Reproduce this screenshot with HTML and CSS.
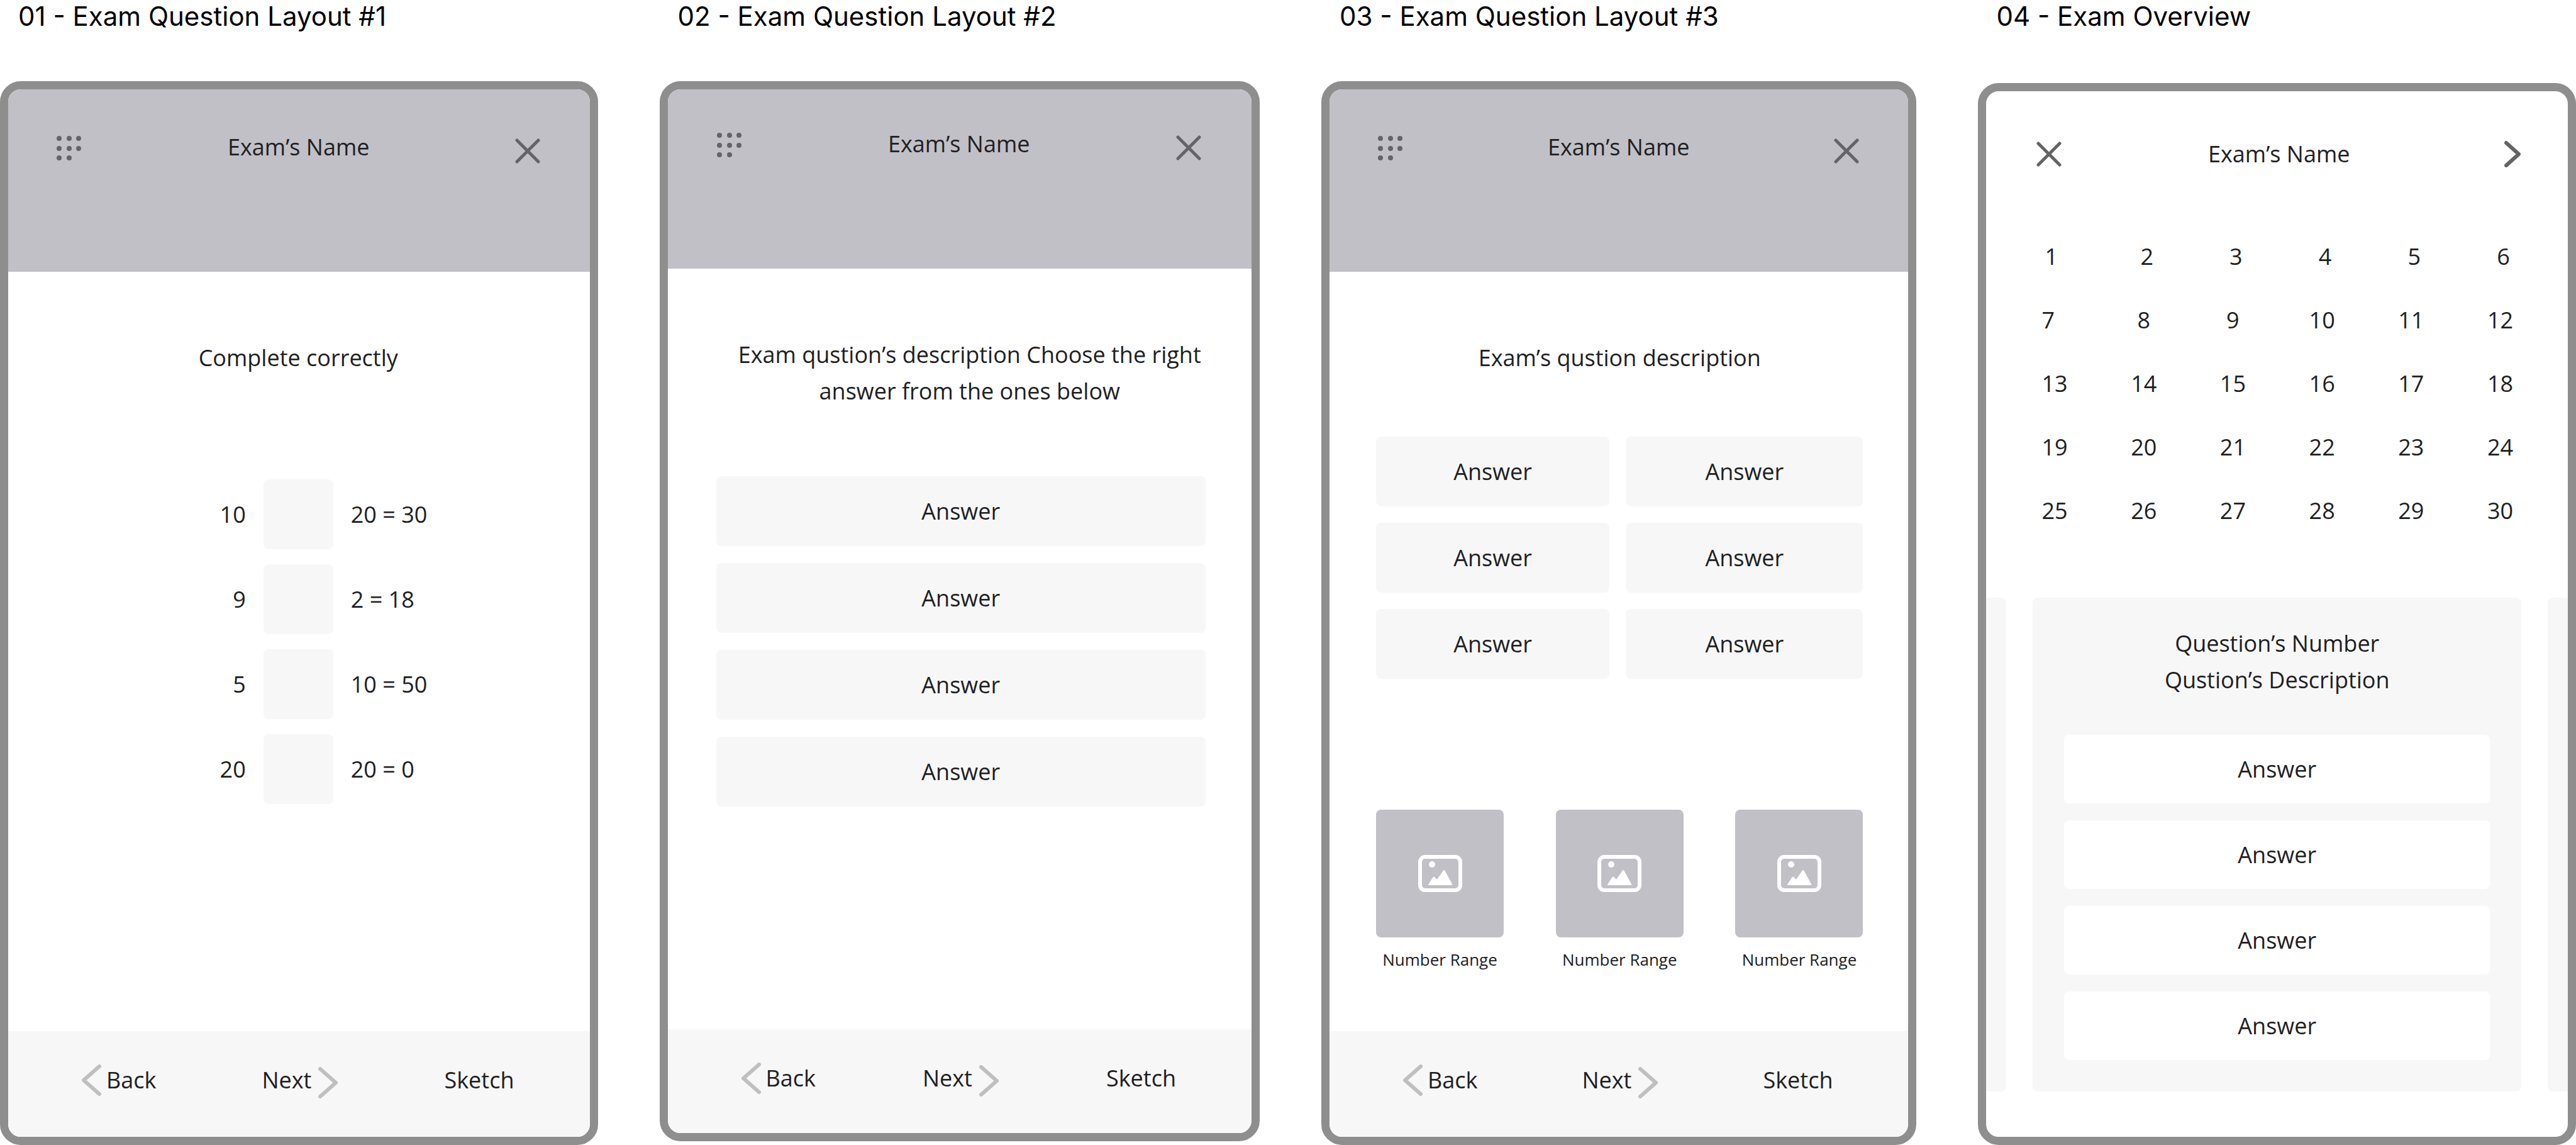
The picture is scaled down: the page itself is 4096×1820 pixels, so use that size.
FILE: index.html
```html
<!DOCTYPE html>
<html lang="en">
<head>
<meta charset="utf-8">
<title>Exam screens</title>
<link rel="stylesheet" href="styles.css">
</head>
<body>
<svg class="sprite" aria-hidden="true">
  <symbol id="dots" viewBox="0 0 40 40">
    <circle cx="4" cy="4" r="4"/><circle cx="20" cy="4" r="4"/><circle cx="35" cy="4" r="4"/>
    <circle cx="4" cy="20" r="4"/><circle cx="20" cy="20" r="4"/><circle cx="35" cy="20" r="4"/>
    <circle cx="4" cy="35" r="4"/><circle cx="20" cy="35" r="4"/>
  </symbol>
  <symbol id="cross" viewBox="0 0 40 40"><path d="M3 3L37 37M37 3L3 37"/></symbol>
  <symbol id="left" viewBox="0 0 32 50"><path d="M29 3L4 25L29 47"/></symbol>
  <symbol id="right" viewBox="0 0 32 50"><path d="M3 3L28 25L3 47"/></symbol>
  <symbol id="forward" viewBox="0 0 27 42"><path d="M3 3L23 21L3 39"/></symbol>
  <symbol id="picture" viewBox="0 0 70 60">
    <rect x="3" y="3" width="64" height="53" rx="8" fill="none" stroke="#fff" stroke-width="6"/>
    <circle cx="22" cy="15" r="5" fill="#fff"/>
    <path d="M16 47L23 36Q25 33 27 36L30 39L39 26Q41 22 43 26L54 46Q55 48 53 48H17Q15 48 16 47Z" fill="#fff"/>
  </symbol>
</svg>
<main class="board">

  <section class="screen complete">
    <h2 class="screen-title">01 - Exam Question Layout #1</h2>
    <div class="phone">
      <header class="bar">
        <button class="icon-btn menu" aria-label="Questions"><svg><use href="#dots"/></svg></button>
        <h3 class="name">Exam’s Name</h3>
        <button class="icon-btn close" aria-label="Close"><svg><use href="#cross"/></svg></button>
      </header>
      <div class="content">
        <p class="question">Complete correctly</p>
        <div class="sums">
          <label class="left" for="s1">10</label><input class="blank" id="s1" type="text"><span>20 = 30</span>
          <label class="left" for="s2">9</label><input class="blank" id="s2" type="text"><span>2 = 18</span>
          <label class="left" for="s3">5</label><input class="blank" id="s3" type="text"><span>10 = 50</span>
          <label class="left" for="s4">20</label><input class="blank" id="s4" type="text"><span>20 = 0</span>
        </div>
      </div>
      <footer class="nav">
        <button class="nav-btn back"><svg><use href="#left"/></svg>Back</button>
        <button class="nav-btn next">Next<svg><use href="#right"/></svg></button>
        <button class="nav-btn">Sketch</button>
      </footer>
    </div>
  </section>

  <section class="screen choice">
    <h2 class="screen-title">02 - Exam Question Layout #2</h2>
    <div class="phone">
      <header class="bar">
        <button class="icon-btn menu" aria-label="Questions"><svg><use href="#dots"/></svg></button>
        <h3 class="name">Exam’s Name</h3>
        <button class="icon-btn close" aria-label="Close"><svg><use href="#cross"/></svg></button>
      </header>
      <div class="content">
        <p class="question">Exam qustion’s description Choose the right<br>answer from the ones below</p>
        <div class="answers">
          <button class="answer">Answer</button>
          <button class="answer">Answer</button>
          <button class="answer">Answer</button>
          <button class="answer">Answer</button>
        </div>
      </div>
      <footer class="nav">
        <button class="nav-btn back"><svg><use href="#left"/></svg>Back</button>
        <button class="nav-btn next">Next<svg><use href="#right"/></svg></button>
        <button class="nav-btn">Sketch</button>
      </footer>
    </div>
  </section>

  <section class="screen range">
    <h2 class="screen-title">03 - Exam Question Layout #3</h2>
    <div class="phone">
      <header class="bar">
        <button class="icon-btn menu" aria-label="Questions"><svg><use href="#dots"/></svg></button>
        <h3 class="name">Exam’s Name</h3>
        <button class="icon-btn close" aria-label="Close"><svg><use href="#cross"/></svg></button>
      </header>
      <div class="content">
        <p class="question">Exam’s qustion description</p>
        <div class="answers pairs">
          <button class="answer">Answer</button>
          <button class="answer">Answer</button>
          <button class="answer">Answer</button>
          <button class="answer">Answer</button>
          <button class="answer">Answer</button>
          <button class="answer">Answer</button>
        </div>
        <div class="pictures">
          <figure class="picture"><div class="thumb"><svg><use href="#picture"/></svg></div><figcaption>Number Range</figcaption></figure>
          <figure class="picture"><div class="thumb"><svg><use href="#picture"/></svg></div><figcaption>Number Range</figcaption></figure>
          <figure class="picture"><div class="thumb"><svg><use href="#picture"/></svg></div><figcaption>Number Range</figcaption></figure>
        </div>
      </div>
      <footer class="nav">
        <button class="nav-btn back"><svg><use href="#left"/></svg>Back</button>
        <button class="nav-btn next">Next<svg><use href="#right"/></svg></button>
        <button class="nav-btn">Sketch</button>
      </footer>
    </div>
  </section>

  <section class="screen overview">
    <h2 class="screen-title">04 - Exam Overview</h2>
    <div class="phone">
      <header class="bar">
        <button class="icon-btn" aria-label="Close"><svg><use href="#cross"/></svg></button>
        <h3 class="name">Exam’s Name</h3>
        <button class="icon-btn forward" aria-label="Forward"><svg><use href="#forward"/></svg></button>
      </header>
      <nav class="numbers" aria-label="Questions">
        <div class="row"><a href="#q1">1</a><a href="#q2">2</a><a href="#q3">3</a><a href="#q4">4</a><a href="#q5">5</a><a href="#q6">6</a></div>
        <div class="row"><a href="#q7">7</a><a href="#q8">8</a><a href="#q9">9</a><a href="#q10">10</a><a href="#q11">11</a><a href="#q12">12</a></div>
        <div class="row"><a href="#q13">13</a><a href="#q14">14</a><a href="#q15">15</a><a href="#q16">16</a><a href="#q17">17</a><a href="#q18">18</a></div>
        <div class="row"><a href="#q19">19</a><a href="#q20">20</a><a href="#q21">21</a><a href="#q22">22</a><a href="#q23">23</a><a href="#q24">24</a></div>
        <div class="row"><a href="#q25">25</a><a href="#q26">26</a><a href="#q27">27</a><a href="#q28">28</a><a href="#q29">29</a><a href="#q30">30</a></div>
      </nav>
      <div class="carousel">
        <div class="peek before"></div>
        <article class="card">
          <p class="question">Question’s Number<br>Qustion’s Description</p>
          <div class="answers">
            <button class="answer">Answer</button>
            <button class="answer">Answer</button>
            <button class="answer">Answer</button>
            <button class="answer">Answer</button>
          </div>
        </article>
        <div class="peek after"></div>
      </div>
    </div>
  </section>

</main>
</body>
</html>
```
FILE: styles.css
```css
* { box-sizing: border-box; }

body {
  margin: 0;
  background: #fff;
  color: #202022;
  font: 36px/58px "Open Sans", sans-serif;
}

h2, h3, p, figure { margin: 0; font-weight: 400; }

button, input {
  margin: 0;
  padding: 0;
  border: 0;
  background: none;
  color: inherit;
  font: inherit;
}

svg { display: block; }
.sprite { display: none; }

/* Board of four screens */
.board {
  display: grid;
  grid-template-columns: 950fr 954fr 946fr 950fr;
  column-gap: 98px;
  min-height: 100vh;
}

.screen { display: flex; flex-direction: column; }
.choice { padding-bottom: 6px; }

.screen-title {
  margin-bottom: 77px;
  padding-left: 29px;
  color: #000;
  font: 42px/52px Inter, sans-serif;
}
.overview .screen-title { margin-bottom: 80px; }

.phone {
  display: flex;
  flex: 1;
  flex-direction: column;
  overflow: hidden;
  border: 13px solid #8e8e8e;
  border-radius: 33px;
  background: #fff;
}

/* Header */
.bar {
  display: flex;
  align-items: flex-start;
  justify-content: space-between;
  height: 290px;
  padding: 63px 78px 0 77px;
  background: #c1c0c7;
}
.choice .bar { height: 285px; padding: 58px 80px 0 78px; }

.name { font-size: 36px; }

.icon-btn svg {
  width: 40px;
  height: 40px;
  fill: none;
  stroke: #646468;
  stroke-width: 5;
  stroke-linecap: round;
}
.menu { padding-top: 11px; }
.menu svg { fill: #646468; stroke: none; }
.close { padding-top: 15px; }

/* Question and answers */
.content { flex: 1; padding: 108px 73px 0 77px; }
.complete .content { padding: 108px 76px 0 74px; }
.range .content { padding: 108px 72px 0 74px; }
.question { text-align: center; }
.choice .question { padding-left: 28px; }

.answers { display: grid; gap: 26px; }
.choice .answers { gap: 27px; margin-top: 106px; }
.pairs { grid-template-columns: 371fr 377fr; margin-top: 96px; }

.answer {
  height: 111px;
  border-radius: 8px;
  background: #f7f7f7;
}

.sums {
  display: grid;
  grid-template-columns: 1fr 111px 1fr;
  gap: 24px 28px;
  align-items: center;
  margin-top: 164px;
}
.left { text-align: right; }
.blank {
  width: 111px;
  height: 111px;
  border-radius: 8px;
  background: #f7f7f7;
  text-align: center;
}

.pictures {
  display: flex;
  justify-content: space-between;
  margin-top: 208px;
}
.picture {
  font-size: 26px;
  line-height: 34px;
  text-align: center;
}
.thumb {
  display: grid;
  place-items: center;
  width: 203px;
  height: 203px;
  margin-bottom: 18px;
  border-radius: 8px;
  background: #c1c0c7;
}
.thumb svg { width: 70px; height: 60px; }

/* Footer */
.nav {
  display: flex;
  align-items: flex-start;
  justify-content: space-between;
  height: 168px;
  padding: 49px 120px 0 116px;
  background: #f7f7f7;
}
.choice .nav { height: 165px; }

.nav-btn { display: flex; align-items: center; }
.nav-btn svg {
  width: 32px;
  height: 50px;
  fill: none;
  stroke: #bfbfc0;
  stroke-width: 6;
  stroke-linecap: round;
  stroke-linejoin: round;
}
.back { gap: 8px; }
.next { gap: 11px; }
.next svg { margin-top: 8px; }

/* Overview */
.overview .bar {
  align-items: center;
  height: auto;
  padding: 71px 74px 0 80px;
  background: none;
}
.forward svg {
  width: 27px;
  height: 42px;
  margin-left: 13px;
  stroke-width: 6;
  stroke-linejoin: round;
}
.overview .bar .icon-btn svg { stroke: #646464; }

.numbers {
  display: grid;
  gap: 43px;
  padding: 105px 87px 0 88px;
}
.row { display: flex; justify-content: space-between; }
.row:first-child { margin: 0 -5px 0 5px; }
.row a {
  width: 41px;
  color: inherit;
  text-align: center;
  text-decoration: none;
}
.row a:first-child { text-align: left; }

.carousel {
  display: grid;
  grid-template-columns: 32px 1fr 32px;
  gap: 42px;
  margin-top: 109px;
}
.peek { background: #f7f7f7; }
.before { border-radius: 0 8px 8px 0; }
.after { border-radius: 8px 0 0 8px; }

.card {
  padding: 44px 50px 50px;
  border-radius: 8px;
  background: #f7f7f7;
}
.card .answers { gap: 27px; margin-top: 58px; }
.card .answer { height: 109px; background: #fff; }
```
